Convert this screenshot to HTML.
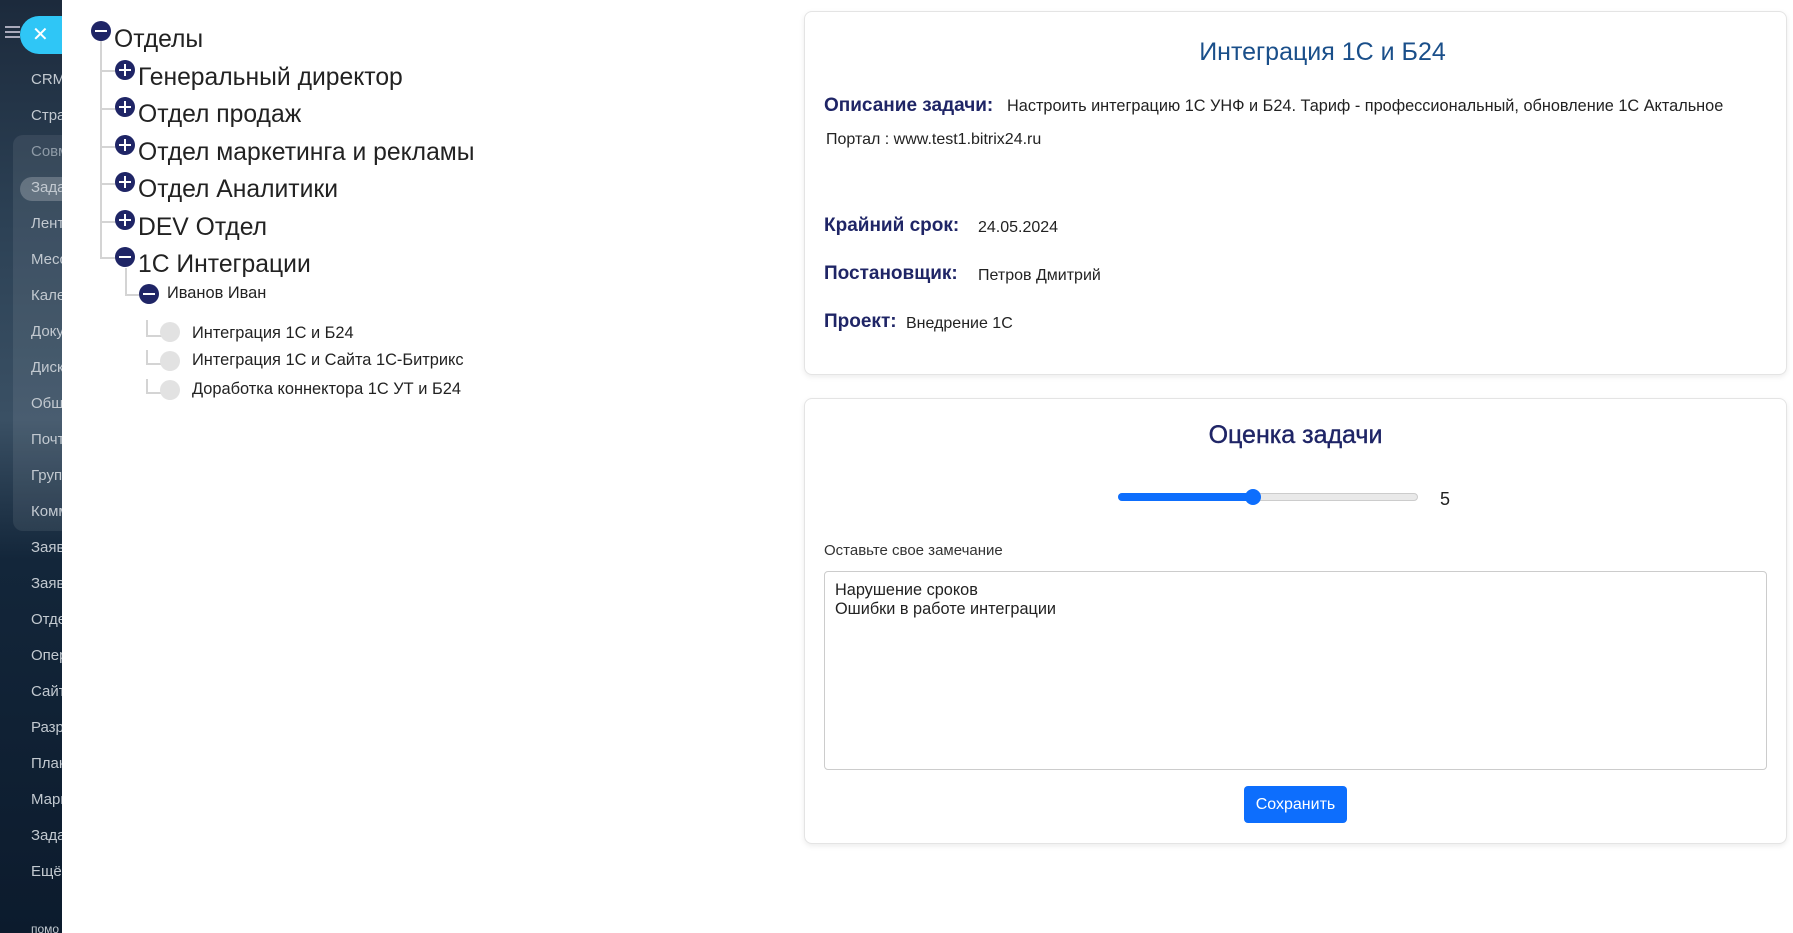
<!DOCTYPE html>
<html><head><meta charset="utf-8"><style>
*{box-sizing:border-box;margin:0;padding:0}
body{width:1793px;height:933px;overflow:hidden;background:#fff;font-family:"Liberation Sans","Noto Sans CJK SC",sans-serif;position:relative}
.sb{position:absolute;left:0;top:0;width:62px;height:933px;background:linear-gradient(180deg,#1c2a3c 0%,#2d4256 25%,#3a5064 45%,#13263a 60%,#0c1b2d 100%);overflow:hidden}
.sb .grp{position:absolute;left:13px;top:135px;width:60px;height:396px;background:rgba(255,255,255,.08);border-radius:10px}
.sb .hl{position:absolute;left:20px;top:177px;width:60px;height:24px;background:rgba(255,255,255,.22);border-radius:12px}
.sb .it{position:absolute;left:31px;font-size:15px;color:#c2c9d0;white-space:nowrap}
.sb .x{position:absolute;left:20px;top:16px;width:60px;height:38px;background:#2fc6f6;border-radius:19px;color:#fff;font-size:20px;line-height:38px;padding-left:12px}
.ham{position:absolute;left:5px;top:26px;width:15px;height:2px;background:#aab;box-shadow:0 5px 0 #aab,0 10px 0 #aab}
.t{position:absolute;white-space:nowrap;color:#222}
.ic{position:absolute;width:20px;height:20px;border-radius:50%;background:#1f2566;color:#fff}
.ic.p::before,.ic.m::before{content:"";position:absolute;left:4px;top:9px;width:12px;height:2px;background:#fff}
.ic.p::after{content:"";position:absolute;left:9px;top:4px;width:2px;height:12px;background:#fff}
.gc{position:absolute;width:20px;height:20px;border-radius:50%;background:#e2e2e2}
.ln{position:absolute;background:#d4d4d4}
.card{position:absolute;left:804px;width:983px;border:1px solid #e4e4e4;border-radius:8px;box-shadow:0 2px 6px rgba(0,0,0,.08);background:#fff}
.lb{position:absolute;left:824px;font-size:19px;color:#1f2566;font-weight:bold;white-space:nowrap}
.v{position:absolute;font-size:16px;color:#222;white-space:nowrap}
.big{font-size:24.7px}
.sm{font-size:16.4px}
</style></head><body>
<div class="sb">
<div class="grp"></div><div class="hl"></div>
<div class="ham"></div>
<div class="it" style="top:71px">CRM</div>
<div class="it" style="top:107px">Стра</div>
<div class="it" style="top:143px;color:#8e9aa6">Совм</div>
<div class="it" style="top:179px">Зада</div>
<div class="it" style="top:215px">Лент</div>
<div class="it" style="top:251px">Месс</div>
<div class="it" style="top:287px">Кале</div>
<div class="it" style="top:323px">Доку</div>
<div class="it" style="top:359px">Диск</div>
<div class="it" style="top:395px">Общ</div>
<div class="it" style="top:431px">Почт</div>
<div class="it" style="top:467px">Груп</div>
<div class="it" style="top:503px">Комм</div>
<div class="it" style="top:539px">Заяв</div>
<div class="it" style="top:575px">Заяв</div>
<div class="it" style="top:611px">Отде</div>
<div class="it" style="top:647px">Опер</div>
<div class="it" style="top:683px">Сайт</div>
<div class="it" style="top:719px">Разр</div>
<div class="it" style="top:755px">План</div>
<div class="it" style="top:791px">Марк</div>
<div class="it" style="top:827px">Зада</div>
<div class="it" style="top:863px">Ещё</div>
<div class="it" style="top:922px;font-size:12px">помо</div>
<div class="x">✕</div>
</div>

<div class="ln" style="left:100px;top:40px;width:2px;height:218px"></div>
<div class="ln" style="left:100px;top:70px;width:18px;height:2px"></div>
<div class="ln" style="left:100px;top:108px;width:18px;height:2px"></div>
<div class="ln" style="left:100px;top:146px;width:18px;height:2px"></div>
<div class="ln" style="left:100px;top:183px;width:18px;height:2px"></div>
<div class="ln" style="left:100px;top:221px;width:18px;height:2px"></div>
<div class="ln" style="left:100px;top:257px;width:18px;height:2px"></div>
<div class="ln" style="left:125px;top:268px;width:2px;height:27px"></div>
<div class="ln" style="left:125px;top:294px;width:14px;height:2px"></div>
<div class="ln" style="left:146px;top:320px;width:2px;height:16px"></div>
<div class="ln" style="left:146px;top:335px;width:16px;height:2px"></div>
<div class="ln" style="left:146px;top:350px;width:2px;height:14px"></div>
<div class="ln" style="left:146px;top:363px;width:16px;height:2px"></div>
<div class="ln" style="left:146px;top:379px;width:2px;height:14px"></div>
<div class="ln" style="left:146px;top:392px;width:16px;height:2px"></div>

<div class="ic m" style="left:91px;top:21px"></div><div class="t big" style="left:114px;top:26px">Отделы</div>
<div class="ic p" style="left:115px;top:60px"></div><div class="t big" style="left:138px;top:64px">Генеральный директор</div>
<div class="ic p" style="left:115px;top:97px"></div><div class="t big" style="left:138px;top:101px">Отдел продаж</div>
<div class="ic p" style="left:115px;top:135px"></div><div class="t big" style="left:138px;top:139px">Отдел маркетинга и рекламы</div>
<div class="ic p" style="left:115px;top:172px"></div><div class="t big" style="left:138px;top:176px">Отдел Аналитики</div>
<div class="ic p" style="left:115px;top:210px"></div><div class="t big" style="left:138px;top:214px">DEV Отдел</div>
<div class="ic m" style="left:115px;top:247px"></div><div class="t big" style="left:138px;top:251px">1С Интеграции</div>
<div class="ic m" style="left:139px;top:284px"></div><div class="t sm" style="left:167px;top:284px">Иванов Иван</div>
<div class="gc" style="left:160px;top:322px"></div><div class="t sm" style="left:192px;top:324px">Интеграция 1С и Б24</div>
<div class="gc" style="left:160px;top:351px"></div><div class="t sm" style="left:192px;top:351px">Интеграция 1С и Сайта 1С-Битрикс</div>
<div class="gc" style="left:160px;top:380px"></div><div class="t sm" style="left:192px;top:380px">Доработка коннектора 1С УТ и Б24</div>

<div class="card" style="top:11px;height:364px"></div>
<div class="t" style="left:804px;width:1037px;text-align:center;top:38px;font-size:25px;color:#1a4f8a">Интеграция 1С и Б24</div>
<div class="lb" style="top:95px">Описание задачи:</div>
<div class="v" style="left:1007px;top:97px;font-size:16.3px">Настроить интеграцию 1С УНФ и Б24. Тариф - профессиональный, обновление 1С Актальное</div>
<div class="v" style="left:826px;top:131px">Портал : www.test1.bitrix24.ru</div>
<div class="lb" style="top:215px">Крайний срок:</div><div class="v" style="left:978px;top:219px">24.05.2024</div>
<div class="lb" style="top:263px">Постановщик:</div><div class="v" style="left:978px;top:267px">Петров Дмитрий</div>
<div class="lb" style="top:311px">Проект:</div><div class="v" style="left:906px;top:315px">Внедрение 1С</div>

<div class="card" style="top:398px;height:446px"></div>
<div class="t" style="left:804px;width:983px;text-align:center;top:421px;font-size:25px;color:#1f2566;font-weight:500;-webkit-text-stroke:0.4px #1f2566">Оценка задачи</div>
<div style="position:absolute;left:1118px;top:493px;width:300px;height:8px;border-radius:4px;background:#e9e9e9;border:1px solid #ccc"></div>
<div style="position:absolute;left:1118px;top:493px;width:136px;height:8px;border-radius:4px;background:#0d6efd"></div>
<div style="position:absolute;left:1245px;top:489px;width:16px;height:16px;border-radius:50%;background:#0d6efd"></div>
<div class="v" style="left:1440px;top:489px;font-size:18px">5</div>
<div class="v" style="left:824px;top:542px;font-size:15px;color:#333">Оставьте свое замечание</div>
<div style="position:absolute;left:824px;top:571px;width:943px;height:199px;border:1px solid #ccc;border-radius:4px"></div>
<div class="v" style="left:835px;top:581px;font-size:16.3px">Нарушение сроков<br>Ошибки в работе интеграции</div>
<div style="position:absolute;left:1244px;top:786px;width:103px;height:37px;background:#0d6efd;border-radius:4px;color:#fff;font-size:16px;text-align:center;line-height:38px">Сохранить</div>
</body></html>
